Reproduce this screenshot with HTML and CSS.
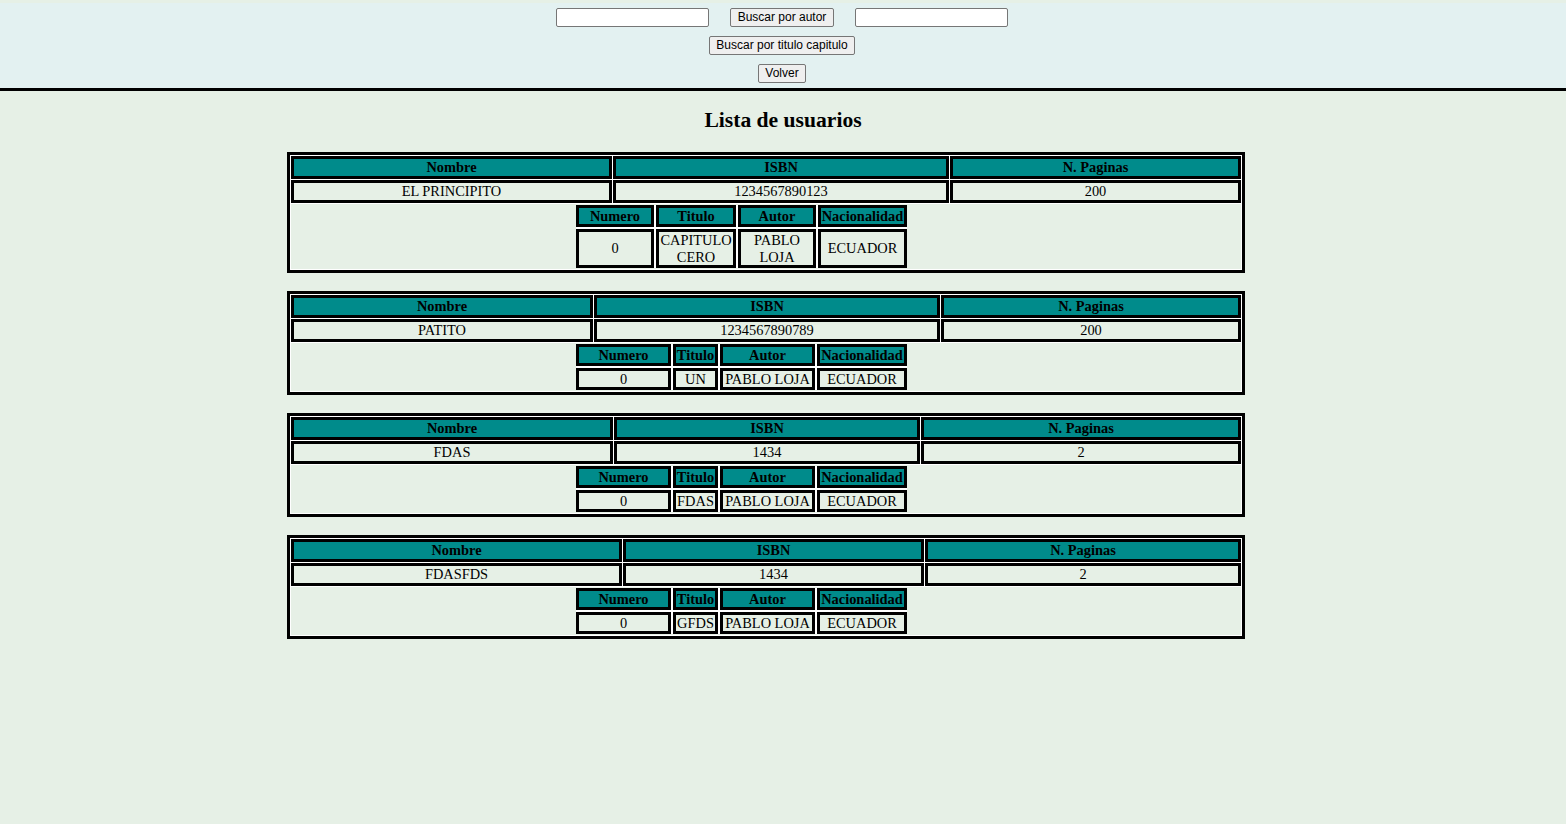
FILE: index.html
```html
<!DOCTYPE html>
<html lang="es">
<head>
<meta charset="utf-8">
<title>Lista de usuarios</title>
<link rel="stylesheet" href="styles.css">
</head>
<body>
<header class="search">
  <div class="search-row">
    <input type="text" class="field">
    <button class="btn btn-autor">Buscar por autor</button>
    <input type="text" class="field">
  </div>
  <div class="search-row"><button class="btn btn-titulo">Buscar por titulo capitulo</button></div>
  <div class="search-row"><button class="btn btn-volver">Volver</button></div>
</header>
<main class="content">
  <h2 class="title">Lista de usuarios</h2>

  <table class="book b1">
    <tr><th class="c1">Nombre</th><th class="c2">ISBN</th><th class="c3">N. Paginas</th></tr>
    <tr><td>EL PRINCIPITO</td><td>1234567890123</td><td>200</td></tr>
    <tr><td colspan="3" class="chapters-cell">
      <table class="chapters ch1">
        <tr><th class="n">Numero</th><th class="t">Titulo</th><th class="a">Autor</th><th class="x">Nacionalidad</th></tr>
        <tr><td>0</td><td>CAPITULO CERO</td><td>PABLO LOJA</td><td>ECUADOR</td></tr>
      </table>
    </td></tr>
  </table>

  <table class="book b2">
    <tr><th class="c1">Nombre</th><th class="c2">ISBN</th><th class="c3">N. Paginas</th></tr>
    <tr><td>PATITO</td><td>1234567890789</td><td>200</td></tr>
    <tr><td colspan="3" class="chapters-cell">
      <table class="chapters ch2">
        <tr><th class="n">Numero</th><th class="t">Titulo</th><th class="a">Autor</th><th class="x">Nacionalidad</th></tr>
        <tr><td>0</td><td>UN</td><td>PABLO LOJA</td><td>ECUADOR</td></tr>
      </table>
    </td></tr>
  </table>

  <table class="book b3">
    <tr><th class="c1">Nombre</th><th class="c2">ISBN</th><th class="c3">N. Paginas</th></tr>
    <tr><td>FDAS</td><td>1434</td><td>2</td></tr>
    <tr><td colspan="3" class="chapters-cell">
      <table class="chapters ch2">
        <tr><th class="n">Numero</th><th class="t">Titulo</th><th class="a">Autor</th><th class="x">Nacionalidad</th></tr>
        <tr><td>0</td><td>FDAS</td><td>PABLO LOJA</td><td>ECUADOR</td></tr>
      </table>
    </td></tr>
  </table>

  <table class="book b4">
    <tr><th class="c1">Nombre</th><th class="c2">ISBN</th><th class="c3">N. Paginas</th></tr>
    <tr><td>FDASFDS</td><td>1434</td><td>2</td></tr>
    <tr><td colspan="3" class="chapters-cell">
      <table class="chapters ch2">
        <tr><th class="n">Numero</th><th class="t">Titulo</th><th class="a">Autor</th><th class="x">Nacionalidad</th></tr>
        <tr><td>0</td><td>GFDS</td><td>PABLO LOJA</td><td>ECUADOR</td></tr>
      </table>
    </td></tr>
  </table>
</main>
</body>
</html>
```
FILE: styles.css
```css
html, body {
  margin: 0;
  padding: 0;
}

body {
  background: #e6f0e6;
  font-family: "Liberation Serif", "Times New Roman", serif;
  color: #000;
  min-height: 824px;
}

/* ---------- search header ---------- */
.search {
  margin-top: 3px;
  background: #e3f1f1;
  border-bottom: 3px solid #000;
  padding: 5px 2px 5px 0;
  display: flex;
  flex-direction: column;
  gap: 9px;
}

.search-row {
  display: flex;
  justify-content: center;
  gap: 21px;
}

.field {
  width: 153px;
  height: 19px;
  box-sizing: border-box;
  margin: 0;
  padding: 0 2px;
  border: 1px solid #767676;
  border-radius: 2px;
  background: #fff;
}

.btn {
  height: 19px;
  box-sizing: border-box;
  margin: 0;
  padding: 0 0 1px;
  font: 12px "Liberation Sans", Arial, sans-serif;
  color: #000;
  background: #efefef;
  border: 1px solid #767676;
  border-radius: 2px;
}

.btn-autor { width: 104px; }
.btn-titulo { width: 146px; }
.btn-volver { width: 48px; }

/* ---------- content ---------- */
.title {
  margin: 17px 0 19px;
  font-size: 21.6px;
  font-weight: bold;
  text-align: center;
}

.book {
  width: 958px;
  margin: 0 0 18px 287px;
  border: 3px solid #000;
  border-spacing: 1px;
  background: #fff;
  table-layout: fixed;
}

.book th,
.book td {
  box-sizing: border-box;
  border: 3px solid #000;
  padding: 0;
  font-size: 14.4px;
  line-height: 17px;
  text-align: center;
  background: #e6f0e6;
}

.book th {
  background: #008b8b;
  font-weight: bold;
}

.book td.chapters-cell {
  border: 0;
  padding: 0;
  text-align: left;
}

.b1 .c1 { width: 321px; }
.b1 .c2 { width: 336px; }
.b1 .c3 { width: 291px; }

.b2 .c1 { width: 302px; }
.b2 .c2 { width: 346px; }
.b2 .c3 { width: 300px; }

.b3 .c1 { width: 322px; }
.b3 .c2 { width: 306px; }
.b3 .c3 { width: 320px; }

.b4 .c1 { width: 331px; }
.b4 .c2 { width: 301px; }
.b4 .c3 { width: 316px; }

/* ---------- nested chapters ---------- */
.book .chapters {
  width: 335px;
  margin: -1px 0 -1px 283px;
  border: 0;
  border-spacing: 2px;
  background: #fff;
  table-layout: fixed;
  clip-path: inset(2px);
}

.book .chapters th,
.book .chapters td {
  line-height: 16px;
}

.book .ch1 td {
  line-height: 16.5px;
}

.ch1 .n { width: 78px; }
.ch1 .t { width: 80px; }
.ch1 .a { width: 78px; }
.ch1 .x { width: 89px; }

.ch2 .n { width: 95px; }
.ch2 .t { width: 45px; }
.ch2 .a { width: 95px; }
.ch2 .x { width: 90px; }
```
